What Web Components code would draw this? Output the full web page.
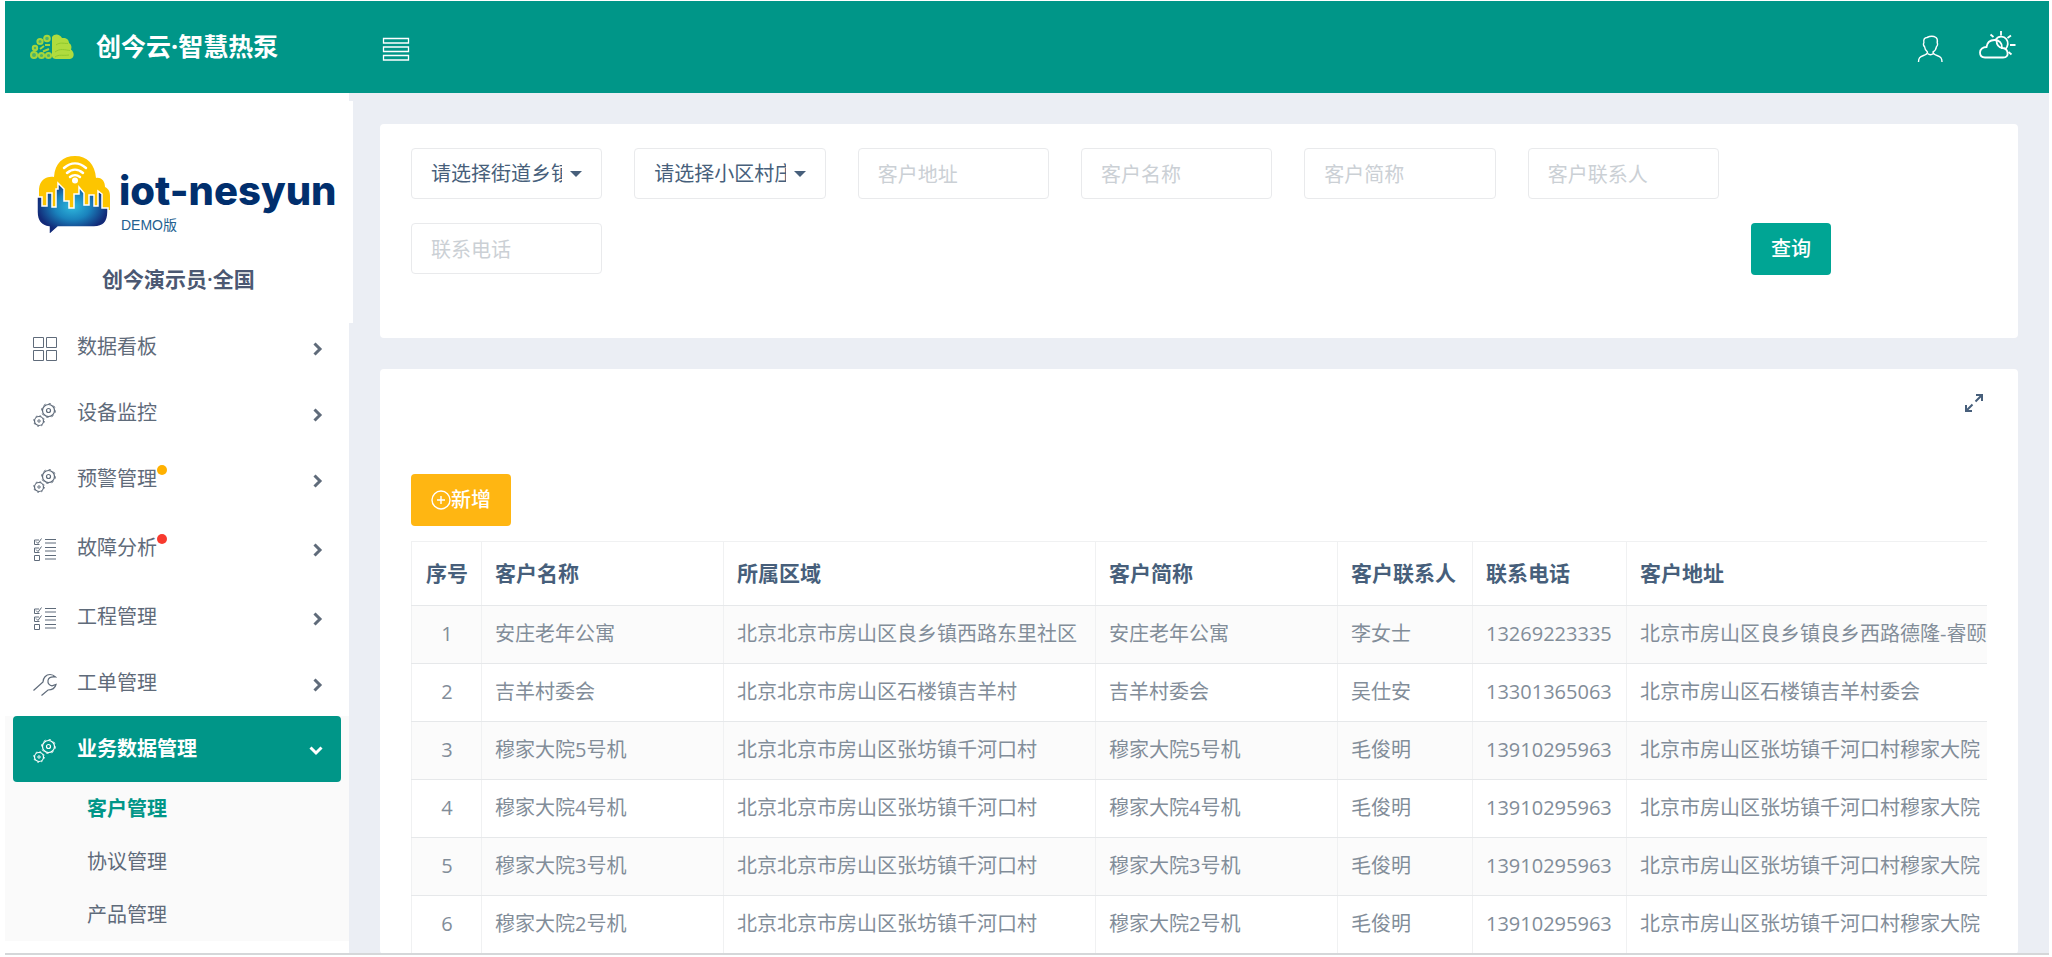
<!DOCTYPE html>
<html lang="zh-CN">
<head>
<meta charset="utf-8">
<title>创今云·智慧热泵</title>
<style>
    html, body {
        margin: 0;
        height: 100%;
        background: #fff;
    }

    body {
        --teal: #009688;
        --ink: #475f7b;
        --muted: #828d99;
        --menu: #5f6b7a;
        --page: #ebeef4;
        font-family: "Open Sans", "Noto Sans CJK SC", sans-serif;
        font-size: 20px;
        line-height: 28px;
        color: var(--ink);
    }
</style>
</head>
<body>
<nes-app>
    <nes-header slot="header" brand="创今云·智慧热泵"></nes-header>

    <nes-sidebar slot="sidebar" user="创今演示员·全国">
        <nes-menu-item icon="grid" label="数据看板"></nes-menu-item>
        <nes-menu-item icon="gears" label="设备监控"></nes-menu-item>
        <nes-menu-item icon="gears" label="预警管理" badge="#ffb100"></nes-menu-item>
        <nes-menu-item icon="checklist" label="故障分析" badge="#f83a2e"></nes-menu-item>
        <nes-menu-item icon="checklist" label="工程管理"></nes-menu-item>
        <nes-menu-item icon="wrench" label="工单管理"></nes-menu-item>
        <nes-menu-item icon="gears" label="业务数据管理" open>
            <nes-sub-item label="客户管理" active></nes-sub-item>
            <nes-sub-item label="协议管理"></nes-sub-item>
            <nes-sub-item label="产品管理"></nes-sub-item>
        </nes-menu-item>
    </nes-sidebar>

    <nes-card>
        <nes-filter>
            <nes-select label="请选择街道乡镇"></nes-select>
            <nes-select label="请选择小区村庄"></nes-select>
            <nes-input label="客户地址"></nes-input>
            <nes-input label="客户名称"></nes-input>
            <nes-input label="客户简称"></nes-input>
            <nes-input label="客户联系人"></nes-input>
            <nes-input label="联系电话"></nes-input>
            <nes-button slot="action">查询</nes-button>
        </nes-filter>
    </nes-card>

    <nes-card grow>
        <nes-icon slot="tools" name="expand"></nes-icon>
        <nes-button kind="warning"><nes-icon name="plus"></nes-icon>新增</nes-button>
        <nes-table></nes-table>
    </nes-card>
</nes-app>

<script>
const ICONS = {
    menu: {
        w: 28, h: 24,
        body: `<g fill="none" stroke="#fff" stroke-width="1.300"><path d="M1.500 1.500h25v4.500h-25zM1.500 10h25v4.500h-25zM1.500 18.500h25v4.500h-25z"/></g>`
    },
    user: {
        w: 26, h: 28,
        body: `<g fill="none" stroke="currentColor" stroke-width="1.400" stroke-linejoin="round">
            <path d="M1.500 27c0-4 1-5 5-6.500 3-1 4-1.500 4-3.500-2-1.500-2.800-3.500-3-5.500-1-.5-1.500-3-.6-3.500C6 4 8 2.500 10 2.500c3-1.500 7-1.300 9 0 1.500 1.200 1.700 3 1.200 5.500.8.800.2 3-.7 3.500-.4 2.500-1.500 4.500-3.500 5.500 0 2 1 2.500 4 3.500 4 1.500 5 2.500 5 6.500"/>
            <path d="M10.500 18.500c2 1.600 4 1.600 6 0"/>
        </g>`
    },
    weather: {
        w: 38, h: 29,
        body: `<g fill="none" stroke="currentColor" stroke-width="1.800">
            <path d="M6 26.500h18c4 0 5-2.500 4.500-5-.4-2.500-2.400-4.500-5.500-4.500.5-5-3-8-7.500-8-5 0-7.500 3.500-8 7C4 16 1 18 1 21.500s2 5 5 5z"/>
            <path d="M16.500 9c2.500-4 8-4.500 10.800-1 2.500 3.200 1.700 7.500-.8 10M17.500 9c0 5 2.500 7.500 6 8"/>
            <path d="M22 0v4.500M32 4.500l-3.500 2.500M31 14h5.500M29.500 21l3 2.500M11.500 3.500l3 2.500"/>
        </g>`
    },
    leaf: {
        w: 44, h: 26,
        body: `<g fill="#4db46a" stroke="#a4d63c" stroke-width="2">
            <circle cx="4" cy="21" r="3"/><circle cx="11.500" cy="21.500" r="2.600"/><circle cx="18.500" cy="21.500" r="2.600"/>
            <circle cx="5" cy="14" r="2.200"/><circle cx="10" cy="7.500" r="2.600"/><circle cx="17" cy="4.500" r="2.800"/>
            <path d="M10 15l4-3M13 17.500l6-2.500M15 11h5"/>
        </g>
        <path fill="#b0dc3e" d="M22 3c3-4 8-2.500 10 1 4-.5 7 1.500 7 5 2.500 1.500 3 4 2 6.500 4 3 3.500 9-1 9.500H26c-2 0-4-1-4-3z"/>
        <path fill="none" stroke="#8fc92e" d="M26 11c4-3 7-1.500 12-1.500M25 18c5-4 10-2 15-1.500M25 23c4-3 8-1 14-2"/>`
    },
    grid: {
        w: 24, h: 24,
        body: `<path fill="none" stroke="currentColor" d="M.5.5h10v10h-10zM13.500.5h10v10h-10zM.5 13.500h10v10h-10zM13.500 13.500h10v10h-10z"/>`
    },
    gears: {
        w: 24, h: 24,
        body: `<g fill="none" stroke="currentColor">
            <circle cx="15.500" cy="7.500" r="6" stroke-width="1.200"/>
            <circle cx="15.500" cy="7.500" r="7" stroke-dasharray="2.200 3.300"/>
            <circle cx="15.500" cy="7.500" r="2" stroke-width="1.200"/>
            <circle cx="6" cy="18" r="4.500" stroke-width="1.200"/>
            <circle cx="6" cy="18" r="5.300" stroke-dasharray="1.700 2.460"/>
            <circle cx="6" cy="18" r="1.200"/>
        </g>`
    },
    checklist: {
        w: 24, h: 24,
        body: `<g fill="none" stroke="currentColor">
            <path d="M12 1.500h11M12 5h11M12 9.500h11M12 13h11M12 17.500h11M12 21h11"/>
            <path d="M6.500 17.500v5h-5v-5zM6 2H1.500v4.500h5M6 10H1.500v4.500h5M3 3.500l2 2 3.500-5M3 11.500l2 2 3.500-5"/>
        </g>`
    },
    wrench: {
        w: 24, h: 24,
        body: `<g fill="none" stroke="currentColor" stroke-width="1.200">
            <path d="M.5 17.500L10 9c0-4 3-7.500 7-7.500 2 0 3.500.5 5.500 2.500-4-.5-7 .5-7.500 3.500s1.500 5 4 5.300l4-1.300c-1 4-4 5.500-8 5.500L8.500 22.500"/>
        </g>`
    },
    expand: {
        w: 20, h: 20,
        body: `<path fill="none" stroke="currentColor" stroke-width="2" d="M11.500 8.500L17 3M12 2h6v6M8.500 11.500L3 17M2 12v6h6"/>`
    },
    plus: {
        w: 20, h: 20,
        body: `<g fill="none" stroke="currentColor" stroke-width="1.400"><circle cx="10" cy="10" r="9"/><path d="M10 6v8M6 10h8"/></g>`
    },
    right: {
        w: 10, h: 14,
        body: `<path fill="none" stroke="currentColor" stroke-width="3" d="M1.500 1.500L7 7l-5.500 5.500"/>`
    },
    down: {
        w: 14, h: 10,
        body: `<path fill="none" stroke="currentColor" stroke-width="3" d="M1.500 1.500L7 7l5.500-5.500"/>`
    },
    caret: {
        w: 12, h: 6,
        body: `<path fill="currentColor" d="M0 0h12L6 6z"/>`
    },
    cloud: {
        w: 72, h: 80,
        body: `<defs><radialGradient id="glow" cx=".5" cy=".45" r=".5">
                <stop offset="0" stop-color="#2fb9de"/><stop offset=".5" stop-color="#1a83bd"/><stop offset="1" stop-color="#122a78"/>
            </radialGradient></defs>
            <path fill="#fdc500" d="M1 50V34c1-9 7-13 15-12C17 8 25 1 37 1s20 8 21 22c6-1 9 4 9 9 4 2 5 5 5 9v14H1z"/>
            <path fill="url(#glow)" stroke="#fff" stroke-width="1.500" d="M-1 42h5v9h5V38h5v14h4V34h2V28l6 6v12h5v7h5V39h5v-7l5 6v12h5V40h5v11h4V36l4 3v14h6v4c0 10-4 15-14 15H20L11 80v-8C4 71-1 66-1 57z"/>
            <g fill="none" stroke="#fff" stroke-width="2.500" stroke-linecap="round">
                <path d="M26 13c7-6 15-6 22 0M29 18c5-4.500 11-4.500 16 0M32 22c3-2.500 7-2.500 10 0"/>
            </g>
            <circle cx="37" cy="25.500" r="3" fill="#fff"/>`
    }
};

class NesIcon extends HTMLElement {
    constructor() {
        super();
        this.attachShadow({mode: "open"});
    }

    connectedCallback() {
        const icon = ICONS[this.getAttribute('name')];

        this.shadowRoot.innerHTML = `
            <style>
                :host { display: block; flex: none; }
                svg { display: block; overflow: visible; }
            </style>
            <svg width="${icon.w}" height="${icon.h}" viewBox="0 0 ${icon.w} ${icon.h}" aria-hidden="true">${icon.body}</svg>
        `;
    }
}

class NesApp extends HTMLElement {
    constructor() {
        super();

        this.attachShadow({mode: "open"});
        this.shadowRoot.innerHTML = `
            <style>
                :host {
                    display: flex;
                    flex-direction: column;
                    box-sizing: border-box;
                    height: 100vh;
                    padding: 1px 3px 2px 5px;
                    overflow: hidden;
                }

                .body {
                    flex: 1;
                    min-height: 0;
                    display: flex;
                    background: var(--page);
                    border-bottom: 2px solid #d5d7d9;
                }

                main {
                    flex: 1;
                    min-width: 0;
                    display: flex;
                    flex-direction: column;
                    gap: 31px;
                    padding: 31px 31px 0;
                    overflow: hidden;
                }
            </style>

            <slot name="header"></slot>
            <div class="body">
                <slot name="sidebar"></slot>
                <main><slot></slot></main>
            </div>
        `;
    }
}

class NesHeader extends HTMLElement {
    constructor() {
        super();
        this.attachShadow({mode: "open"});
    }

    connectedCallback() {
        this.shadowRoot.innerHTML = `
            <style>
                :host {
                    display: flex;
                    align-items: center;
                    box-sizing: border-box;
                    height: 92px;
                    padding: 0 32px 0 25px;
                    background: var(--teal);
                    color: #fff;
                }

                .brand {
                    display: flex;
                    align-items: center;
                    gap: 22px;
                    width: 352px;
                }

                h1 {
                    margin: 0;
                    padding-bottom: 2px;
                    font-size: 25px;
                    line-height: 36px;
                    font-weight: 700;
                }

                button {
                    padding: 4px 0 0;
                    border: 0;
                    background: none;
                    color: inherit;
                    cursor: pointer;
                }

                .tools {
                    display: flex;
                    align-items: flex-start;
                    gap: 36px;
                    margin-left: auto;
                }

                .tools button:last-child { padding: 0; }
            </style>

            <div class="brand">
                <nes-icon name="leaf"></nes-icon>
                <h1>${this.getAttribute('brand')}</h1>
            </div>
            <button type="button" aria-label="菜单"><nes-icon name="menu"></nes-icon></button>
            <div class="tools">
                <button type="button" aria-label="用户"><nes-icon name="user"></nes-icon></button>
                <button type="button" aria-label="天气"><nes-icon name="weather"></nes-icon></button>
            </div>
        `;
    }
}

class NesSidebar extends HTMLElement {
    constructor() {
        super();
        this.attachShadow({mode: "open"});
    }

    connectedCallback() {
        this.shadowRoot.innerHTML = `
            <style>
                :host {
                    display: block;
                    flex: none;
                    width: 344px;
                    background: #fff;
                }

                /* the profile block is a little wider than the menu */
                .profile {
                    box-sizing: border-box;
                    height: 222px;
                    margin: 8px -4px -9px 0;
                    padding: 54px 18px 0 33px;
                    background: #fff;
                }

                .logo {
                    display: flex;
                    gap: 9px;
                    height: 80px;
                }

                .name {
                    padding-top: 12px;
                    font-family: Inter, sans-serif;
                    font-size: 40px;
                    line-height: 48px;
                    font-weight: 800;
                    white-space: nowrap;
                    color: #012f6d;
                }

                .edition {
                    padding-left: 2px;
                    font-family: "Liberation Sans", "Noto Sans CJK SC", sans-serif;
                    font-size: 14px;
                    line-height: 20px;
                    color: #24618f;
                }

                .user {
                    margin-top: 30px;
                    padding-right: 16px;
                    text-align: center;
                    font-size: 21px;
                    font-weight: 600;
                    color: #4b5872;
                }
            </style>

            <div class="profile">
                <div class="logo">
                    <nes-icon name="cloud"></nes-icon>
                    <div>
                        <div class="name">iot-nesyun</div>
                        <div class="edition">DEMO版</div>
                    </div>
                </div>
                <div class="user">${this.getAttribute('user')}</div>
            </div>
            <nav><slot></slot></nav>
        `;
    }
}

class NesMenuItem extends HTMLElement {
    constructor() {
        super();
        this.attachShadow({mode: "open"});
    }

    connectedCallback() {
        const badge = this.getAttribute('badge');
        const open = this.hasAttribute('open');

        this.shadowRoot.innerHTML = `
            <style>
                :host {
                    display: block;
                    color: var(--menu);
                }

                :host([badge]) { padding-bottom: 3px; }

                :host([open]) {
                    color: #fff;
                    font-weight: 700;
                    background: #fafafa;
                }

                a {
                    display: flex;
                    align-items: center;
                    gap: 20px;
                    height: 66px;
                    margin: 0 8px;
                    padding: 4px 18px 0 20px;
                    box-sizing: border-box;
                    border-radius: 4px;
                    color: inherit;
                    text-decoration: none;
                }

                :host([open]) a { background: var(--teal); }

                .label {
                    position: relative;
                    margin-right: auto;
                    padding-bottom: 4px;
                }

                .badge {
                    position: absolute;
                    left: 100%;
                    top: 0;
                    width: 10px;
                    height: 10px;
                    border-radius: 50%;
                    background: ${badge || 'none'};
                }
            </style>

            <a href="#">
                <nes-icon name="${this.getAttribute('icon')}"></nes-icon>
                <span class="label">${this.getAttribute('label')}${badge ? '<i class="badge"></i>' : ''}</span>
                <nes-icon name="${open ? 'down' : 'right'}"></nes-icon>
            </a>
            <slot></slot>
        `;
    }
}

class NesSubItem extends HTMLElement {
    constructor() {
        super();
        this.attachShadow({mode: "open"});
    }

    connectedCallback() {
        this.shadowRoot.innerHTML = `
            <style>
                :host {
                    display: block;
                    color: var(--menu);
                    font-weight: 400;
                }

                :host([active]) {
                    color: var(--teal);
                    font-weight: 700;
                }

                a {
                    display: block;
                    padding-left: 82px;
                    line-height: 53px;
                    color: inherit;
                    text-decoration: none;
                }
            </style>

            <a href="#">${this.getAttribute('label')}</a>
        `;
    }
}

class NesCard extends HTMLElement {
    constructor() {
        super();

        this.attachShadow({mode: "open"});
        this.shadowRoot.innerHTML = `
            <style>
                :host {
                    display: block;
                    flex: none;
                    padding: 24px 31px 63px;
                    border-radius: 4px;
                    background: #fff;
                }

                :host([grow]) {
                    flex: 1 0 auto;
                    padding-bottom: 0;
                }

                :host([grow]) .tools {
                    display: flex;
                    justify-content: flex-end;
                    height: 81px;
                    padding-right: 3px;
                }
            </style>

            <div class="tools"><slot name="tools"></slot></div>
            <slot></slot>
        `;
    }
}

class NesFilter extends HTMLElement {
    constructor() {
        super();

        this.attachShadow({mode: "open"});
        this.shadowRoot.innerHTML = `
            <style>
                form {
                    display: grid;
                    grid-template-columns: repeat(6, minmax(0, 1fr)) 236px;
                    gap: 24px 32px;
                    margin: 0;
                }

                /* the last column belongs to the action */
                ::slotted(:nth-child(7)) {
                    grid-column: 1;
                    grid-row: 2;
                }

                .action {
                    grid-column: 7;
                    grid-row: 2;
                }
            </style>

            <form>
                <slot></slot>
                <div class="action"><slot name="action"></slot></div>
            </form>
        `;
    }
}

const FIELD_STYLE = `
    input, select {
        display: block;
        box-sizing: border-box;
        width: 100%;
        height: 51px;
        margin: 0;
        padding: 0 19px;
        border: 1px solid #e9eaec;
        border-radius: 4px;
        background: #fff;
        font: inherit;
        color: var(--ink);
        outline: none;
    }
`;

class NesInput extends HTMLElement {
    constructor() {
        super();
        this.attachShadow({mode: "open"});
    }

    connectedCallback() {
        const label = this.getAttribute('label');

        this.shadowRoot.innerHTML = `
            <style>
                :host { display: block; }
                ${FIELD_STYLE}
                input { padding-top: 2px; }
                input::placeholder { color: #cbd0d5; opacity: 1; }
            </style>
            <input type="text" placeholder="${label}" aria-label="${label}">
        `;
    }
}

class NesSelect extends HTMLElement {
    constructor() {
        super();
        this.attachShadow({mode: "open"});
    }

    connectedCallback() {
        const label = this.getAttribute('label');

        this.shadowRoot.innerHTML = `
            <style>
                :host {
                    display: grid;
                    align-items: center;
                }

                ${FIELD_STYLE}

                select, nes-icon { grid-area: 1 / 1; }

                select {
                    appearance: none;
                    padding-right: 39px;
                }

                nes-icon {
                    justify-self: end;
                    margin-right: 20px;
                    pointer-events: none;
                }
            </style>
            <select aria-label="${label}"><option>${label}</option></select>
            <nes-icon name="caret"></nes-icon>
        `;
    }
}

class NesButton extends HTMLElement {
    constructor() {
        super();

        this.attachShadow({mode: "open"});
        this.shadowRoot.innerHTML = `
            <style>
                :host { display: block; }

                button {
                    display: flex;
                    align-items: center;
                    height: 52px;
                    padding: 0 20px;
                    border: 0;
                    border-radius: 4px;
                    background: #00a594;
                    font: inherit;
                    font-weight: 500;
                    color: #fff;
                    cursor: pointer;
                }

                :host([kind="warning"]) button { background: #ffb612; }
            </style>
            <button type="button"><slot></slot></button>
        `;
    }
}

class NesTable extends HTMLElement {
    columns = [
        ['序号', 70], ['客户名称', 242], ['所属区域', 372], ['客户简称', 242],
        ['客户联系人', 135], ['联系电话', 154], ['客户地址', 480]
    ];

    rows = [
        ['安庄老年公寓', '北京北京市房山区良乡镇西路东里社区', '李女士', '13269223335', '北京市房山区良乡镇良乡西路德隆-睿颐'],
        ['吉羊村委会', '北京北京市房山区石楼镇吉羊村', '吴仕安', '13301365063', '北京市房山区石楼镇吉羊村委会'],
        ...[5, 4, 3, 2].map((n) => [
            `穆家大院${n}号机`, '北京北京市房山区张坊镇千河口村', '毛俊明', '13910295963', '北京市房山区张坊镇千河口村穆家大院'
        ])
    ];

    constructor() {
        super();
        this.attachShadow({mode: "open"});
    }

    connectedCallback() {
        const cols = this.columns.map(([, width]) => `<col style="width: ${width}px">`).join('');
        const head = this.columns.map(([title]) => `<th scope="col">${title}</th>`).join('');
        const body = this.rows.map(([name, area, contact, phone, address], i) => `
            <tr>${[i + 1, name, area, name, contact, phone, address].map((text) => `<td>${text}</td>`).join('')}</tr>
        `).join('');

        this.shadowRoot.innerHTML = `
            <style>
                :host {
                    display: block;
                    margin-top: 15px;
                    overflow: hidden;
                }

                table {
                    table-layout: fixed;
                    width: 1695px;
                    border-collapse: collapse;
                }

                th, td {
                    box-sizing: border-box;
                    height: 58px;
                    padding: 0 12px 2px 13px;
                    border: 1px solid #f0f1f2;
                    border-bottom-color: #e6e8ea;
                    text-align: left;
                    white-space: nowrap;
                    font-weight: 400;
                    color: var(--muted);
                }

                th {
                    height: 64px;
                    font-size: 21px;
                    font-weight: 600;
                    color: var(--ink);
                }

                th:first-child, td:first-child { text-align: center; }

                tbody tr:nth-child(odd) { background: #fbfbfb; }
            </style>

            <table>
                <colgroup>${cols}</colgroup>
                <thead><tr>${head}</tr></thead>
                <tbody>${body}</tbody>
            </table>
        `;
    }
}

customElements.define('nes-icon', NesIcon);
customElements.define('nes-app', NesApp);
customElements.define('nes-header', NesHeader);
customElements.define('nes-sidebar', NesSidebar);
customElements.define('nes-menu-item', NesMenuItem);
customElements.define('nes-sub-item', NesSubItem);
customElements.define('nes-card', NesCard);
customElements.define('nes-filter', NesFilter);
customElements.define('nes-input', NesInput);
customElements.define('nes-select', NesSelect);
customElements.define('nes-button', NesButton);
customElements.define('nes-table', NesTable);
</script>
</body>
</html>
